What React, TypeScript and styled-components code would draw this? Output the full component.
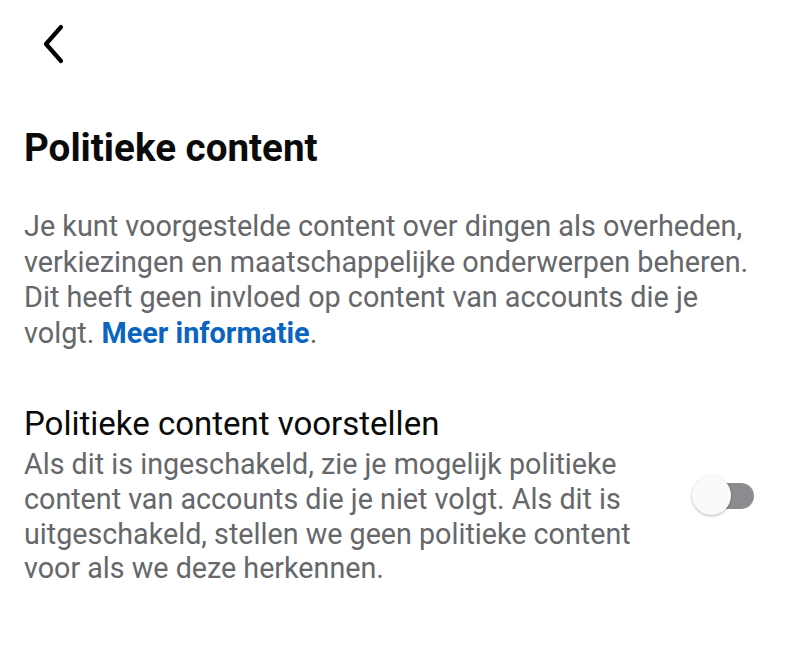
import React, { useState } from "react";
import styled, { createGlobalStyle } from "styled-components";

const GlobalStyle = createGlobalStyle`
  html, body {
    margin: 0;
    padding: 0;
    background: #ffffff;
  }
  body {
    font-family: Roboto, "Noto Sans", "Liberation Sans", sans-serif;
    -webkit-font-smoothing: antialiased;
  }
`;

const Page = styled.div`
  width: 800px;
  height: 648px;
  box-sizing: border-box;
  padding: 0 46px 0 24px;
  background: #ffffff;
  overflow: hidden;
`;

const TopBar = styled.div`
  height: 88px;
  display: flex;
  align-items: center;
`;

const BackButton = styled.button`
  width: 40px;
  height: 40px;
  margin-left: 10px;
  margin-top: -1px;
  padding: 0;
  border: none;
  background: none;
  display: flex;
  align-items: center;
  justify-content: center;
  color: #000;
  cursor: pointer;
`;

const Title = styled.h1`
  margin: 36px 0 0;
  font-size: 38.6px;
  line-height: 48px;
  font-weight: 700;
  color: #0a0a0a;
`;

const Description = styled.p`
  margin: 37px -40px 0 0;
  font-size: 28.8px;
  line-height: 35.5px;
  font-weight: 400;
  color: #65676b;
  white-space: nowrap;
`;

const Link = styled.a`
  color: #0a64c2;
  font-weight: 700;
  text-decoration: none;
`;

const SettingRow = styled.div`
  margin-top: 52px;
  display: flex;
  align-items: center;
  justify-content: space-between;
`;

const SettingText = styled.div`
  width: 640px;
`;

const SettingLabel = styled.div`
  font-size: 33px;
  line-height: 41px;
  color: #0a0a0a;
`;

const SettingHint = styled.div`
  margin-top: 3px;
  font-size: 28.7px;
  line-height: 34.8px;
  color: #65676b;
`;

const Switch = styled.button`
  position: relative;
  width: 62px;
  height: 40px;
  margin-top: 2px;
  padding: 0;
  border: none;
  background: none;
  cursor: pointer;
  flex-shrink: 0;
`;

const Track = styled.span<{ $on: boolean }>`
  position: absolute;
  left: 8px;
  right: 0;
  top: 7px;
  height: 26px;
  border-radius: 13px;
  background: ${(p) => (p.$on ? "#0a64c2" : "#8a8c90")};
`;

const Knob = styled.span<{ $on: boolean }>`
  position: absolute;
  top: 0;
  left: ${(p) => (p.$on ? "22px" : "0")};
  width: 39px;
  height: 39px;
  border-radius: 50%;
  background: #fafafa;
  box-shadow: 0 1px 3px rgba(0, 0, 0, 0.28);
`;

function ChevronLeft() {
  return (
    <svg width="24" height="40" viewBox="0 0 24 40" fill="none">
      <path
        d="M19 3 L4 20 L19 37"
        stroke="#000"
        strokeWidth="4.2"
        strokeLinecap="round"
        strokeLinejoin="round"
      />
    </svg>
  );
}

export default function App() {
  const [on, setOn] = useState(false);
  return (
    <Page>
      <GlobalStyle />
      <TopBar>
        <BackButton aria-label="Terug">
          <ChevronLeft />
        </BackButton>
      </TopBar>
      <Title>Politieke content</Title>
      <Description>
        Je kunt voorgestelde content over dingen als overheden,
        <br />
        verkiezingen en maatschappelijke onderwerpen beheren.
        <br />
        Dit heeft geen invloed op content van accounts die je
        <br />
        volgt. <Link href="#">Meer informatie</Link>.
      </Description>
      <SettingRow>
        <SettingText>
          <SettingLabel>Politieke content voorstellen</SettingLabel>
          <SettingHint>
            Als dit is ingeschakeld, zie je mogelijk politieke content van
            accounts die je niet volgt. Als dit is uitgeschakeld, stellen we
            geen politieke content voor als we deze herkennen.
          </SettingHint>
        </SettingText>
        <Switch onClick={() => setOn(!on)} aria-pressed={on}>
          <Track $on={on} />
          <Knob $on={on} />
        </Switch>
      </SettingRow>
    </Page>
  );
}
